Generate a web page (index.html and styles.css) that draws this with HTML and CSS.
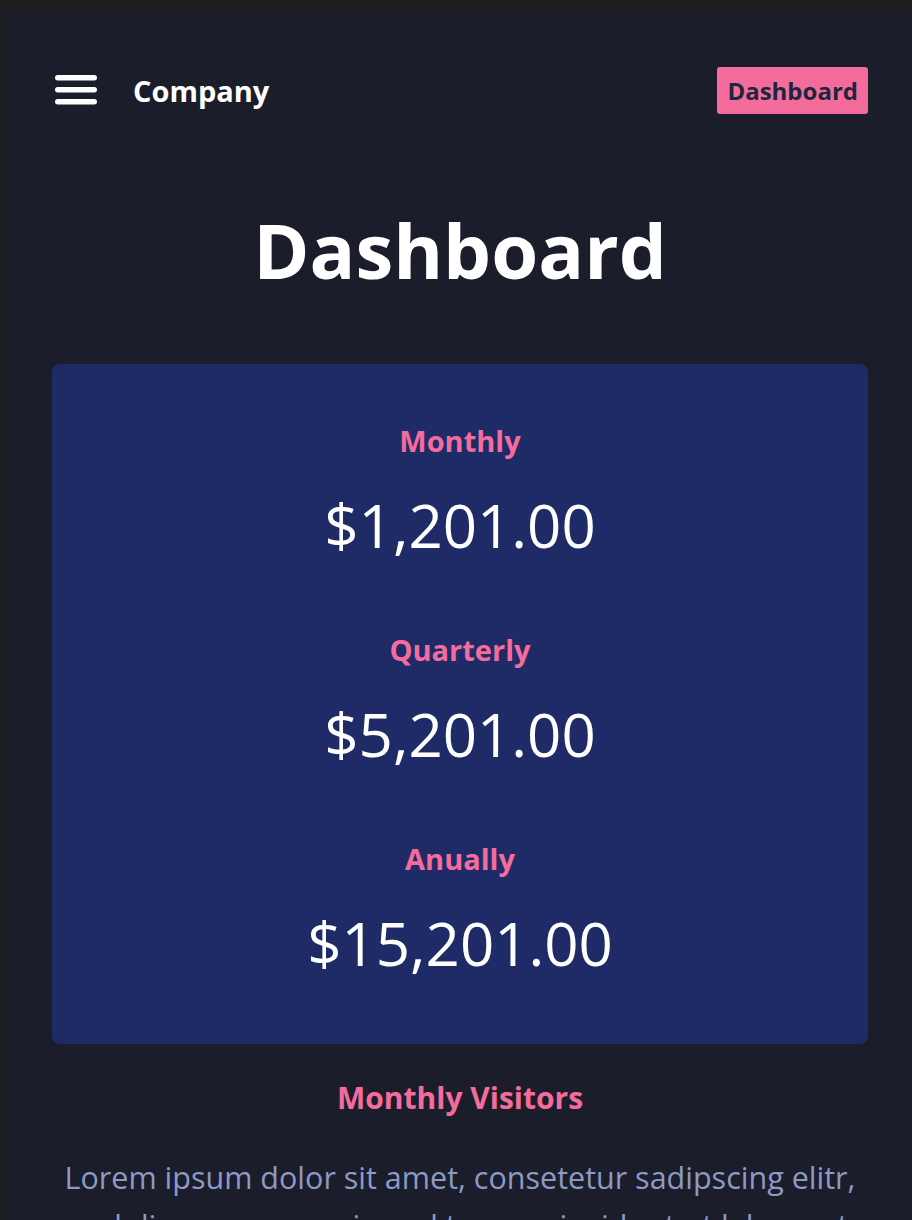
FILE: index.html
```html
<!DOCTYPE html>
<html lang="en">
<head>
<meta charset="utf-8">
<title>Dashboard</title>
<link rel="stylesheet" href="styles.css">
</head>
<body>
<main class="app">
  <header class="topbar">
    <div class="brand">
      <svg class="menu-icon" width="42" height="30" viewBox="0 0 42 30" aria-hidden="true">
        <rect x="0" y="0" width="42" height="5.5" rx="2.75" fill="#ffffff"/>
        <rect x="0" y="12" width="42" height="5.5" rx="2.75" fill="#ffffff"/>
        <rect x="0" y="24" width="42" height="5.5" rx="2.75" fill="#ffffff"/>
      </svg>
      <span class="brand-name">Company</span>
    </div>
    <a class="nav-btn" href="#">Dashboard</a>
  </header>

  <h1 class="page-title">Dashboard</h1>

  <section class="stats-card">
    <div class="stat">
      <div class="stat-label">Monthly</div>
      <div class="stat-value">$1,201.00</div>
    </div>
    <div class="stat">
      <div class="stat-label">Quarterly</div>
      <div class="stat-value">$5,201.00</div>
    </div>
    <div class="stat">
      <div class="stat-label">Anually</div>
      <div class="stat-value">$15,201.00</div>
    </div>
  </section>

  <section class="visitors">
    <h2 class="visitors-title">Monthly Visitors</h2>
    <p class="visitors-text">Lorem ipsum dolor sit amet, consetetur sadipscing elitr, sed diam nonumy eirmod tempor invidunt ut labore et dolore magna aliquyam erat, sed diam voluptua.</p>
  </section>
</main>
</body>
</html>
```

FILE: styles.css
```css
html, body {
  margin: 0;
  padding: 0;
}

body {
  background: #1f1f20;
  font-family: "Open Sans", "Noto Sans", sans-serif;
  padding-top: 10px;
  padding-left: 3px;
  min-height: 1220px;
  box-sizing: border-box;
}

.app {
  background: #1b1e2a;
  min-height: 1210px;
  padding: 0 44px 0 49px;
  box-sizing: border-box;
  color: #ffffff;
}

.topbar {
  display: flex;
  align-items: center;
  justify-content: space-between;
  height: 160px;
  box-sizing: border-box;
}

.brand {
  display: flex;
  align-items: center;
  gap: 36px;
  padding-left: 3px;
}

.menu-icon {
  display: block;
}

.brand-name {
  font-size: 29px;
  font-weight: 700;
  color: #ffffff;
}

.nav-btn {
  display: block;
  background: #f46c9c;
  color: #1d2540;
  font-size: 24px;
  font-weight: 700;
  text-decoration: none;
  padding: 0 10px;
  height: 47px;
  line-height: 47px;
  border-radius: 3px;
}

.page-title {
  margin: 42px 0 0;
  text-align: center;
  font-size: 76px;
  font-weight: 700;
  line-height: 1;
  color: #ffffff;
}

.stats-card {
  margin-top: 76px;
  background: #1e2b67;
  border-radius: 8px;
  padding: 57px 20px 61px;
  display: flex;
  flex-direction: column;
  gap: 65px;
}

.stat {
  text-align: center;
}

.stat-label {
  font-size: 29px;
  font-weight: 700;
  color: #f46c9c;
  line-height: 40px;
}

.stat-value {
  font-size: 60px;
  font-weight: 400;
  color: #ffffff;
  line-height: 80px;
  margin-top: 24px;
}

.visitors {
  text-align: center;
  padding-top: 36px;
}

.visitors-title {
  margin: 0;
  font-size: 30px;
  font-weight: 700;
  color: #f46c9c;
  line-height: 36px;
}

.visitors-text {
  margin: 37px 0 0;
  font-size: 30.5px;
  line-height: 48px;
  color: #8d9ac6;
  padding: 0 10px;
}
```
